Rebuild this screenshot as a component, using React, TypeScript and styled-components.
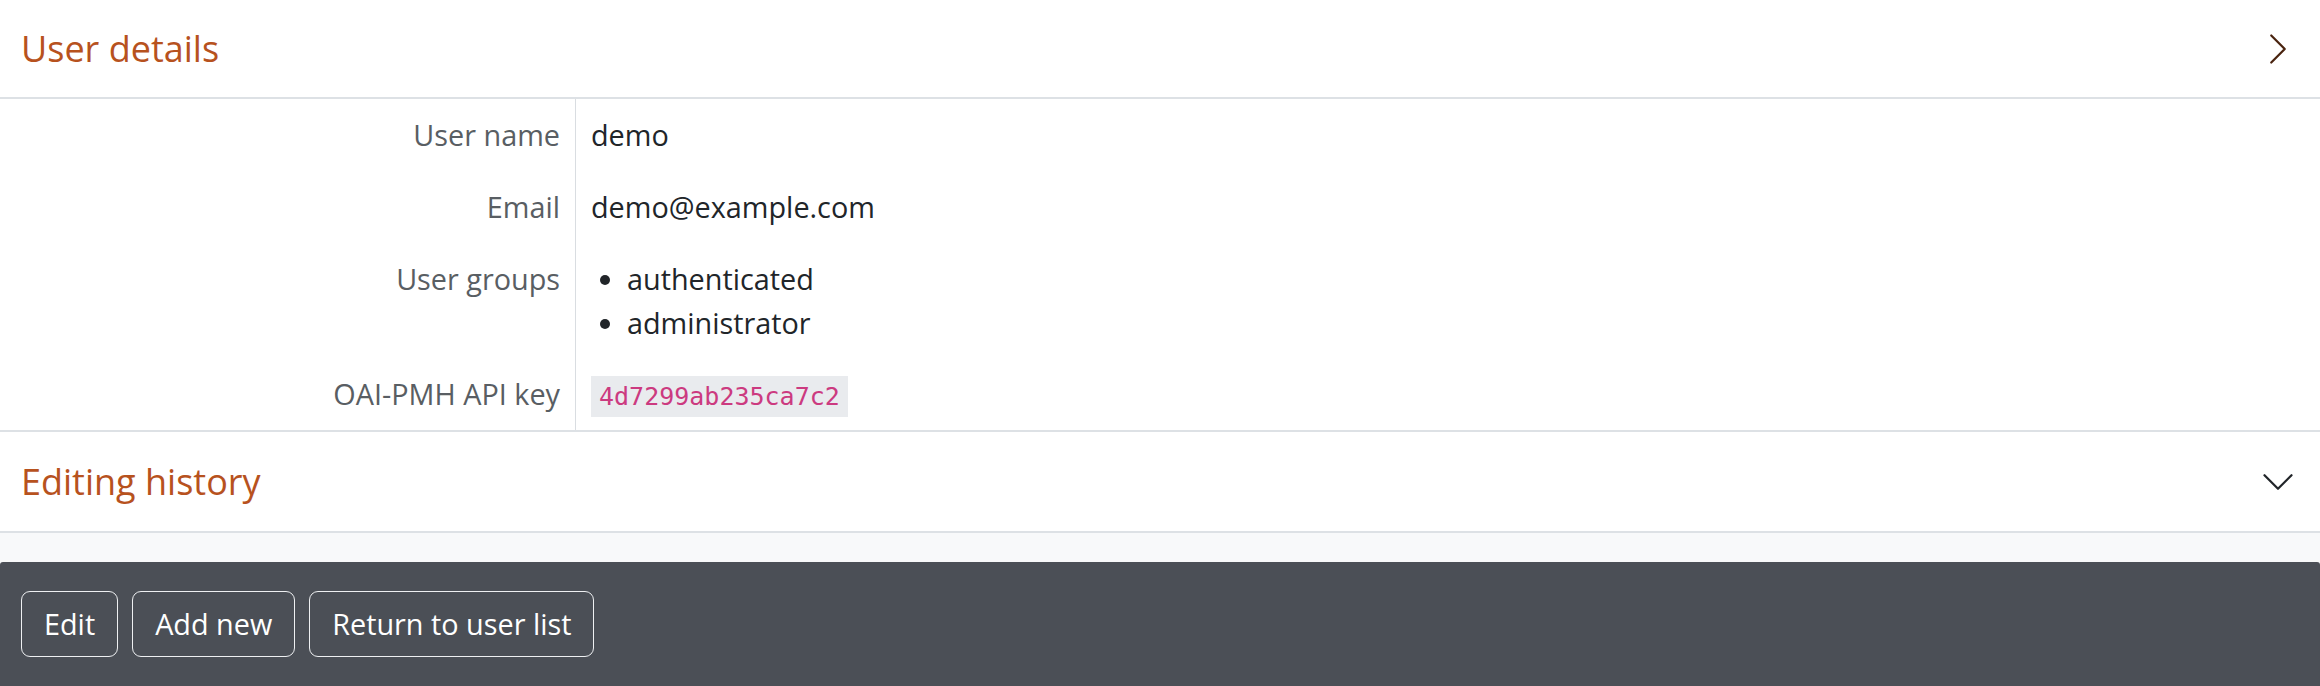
import React from "react";
import styled, { createGlobalStyle } from "styled-components";

const GlobalStyle = createGlobalStyle`
  html, body {
    margin: 0;
    padding: 0;
    background: #f8f9fa;
    font-family: "Open Sans", "Liberation Sans", sans-serif;
    color: #212529;
    overflow: hidden;
  }
  * { box-sizing: border-box; }
`;

const Page = styled.div`
  display: flex;
  flex-direction: column;
  min-height: 686px;
`;

const Accordion = styled.div`
  background: #ffffff;
  margin-bottom: 29px;
`;

const Item = styled.section<{ $first?: boolean }>`
  border-top: ${(p) => (p.$first ? "none" : "2px solid #dde1e5")};
  &:last-child {
    border-bottom: 2px solid #dde1e5;
  }
`;

const Header = styled.div<{ $open?: boolean }>`
  display: flex;
  align-items: center;
  justify-content: space-between;
  height: 99px;
  padding: 0 24px 0 21px;
  border-bottom: ${(p) => (p.$open ? "2px solid #dde1e5" : "none")};
`;

const Title = styled.h2`
  margin: 0;
  font-size: 36px;
  font-weight: 400;
  line-height: 1.5;
  color: #b7521e;
`;

const Chevron = styled.svg<{ $tone: string }>`
  width: 36px;
  height: 36px;
  flex: none;
  stroke: ${(p) => p.$tone};
  fill: none;
`;

const DetailsGrid = styled.dl`
  display: grid;
  grid-template-columns: 576px 1fr;
  margin: 0;
  font-size: 28.8px;
  line-height: 1.5;
`;

const Label = styled.dt`
  margin: 0;
  padding: 14.4px 15px;
  text-align: right;
  color: #595e63;
  border-right: 1px solid #d9dde1;
`;

const Value = styled.dd`
  margin: 0;
  padding: 14.4px 15px;
  color: #212529;
`;

const GroupList = styled.ul`
  margin: 0;
  padding-left: 36px;
  list-style: disc;
`;

const Code = styled.code`
  font-family: "DejaVu Sans Mono", "Liberation Mono", monospace;
  font-size: 25px;
  color: #cc3a80;
  background: #e9ebee;
  padding: 6px 8px;
`;

const Footer = styled.footer`
  display: flex;
  gap: 14px;
  align-items: flex-start;
  background: #4b4f56;
  padding: 29px 21px 26px;
  border-radius: 3px 3px 0 0;
  flex: 1;
`;

const FooterButton = styled.button`
  font-family: "Open Sans", "Liberation Sans", sans-serif;
  font-size: 28.8px;
  line-height: 1.5;
  color: #ffffff;
  background: transparent;
  border: 1px solid #eef0f2;
  border-radius: 9px;
  padding: 10px 22px;
  cursor: pointer;
`;

const ChevronRight = () => (
  <Chevron viewBox="0 0 16 16" $tone="#4a2410" strokeWidth={1} strokeLinecap="round" strokeLinejoin="round">
    <path d="M5 2 L11 8 L5 14" />
  </Chevron>
);

const ChevronDown = () => (
  <Chevron viewBox="0 0 16 16" $tone="#212529" strokeWidth={1} strokeLinecap="round" strokeLinejoin="round">
    <path d="M2 5 L8 11 L14 5" />
  </Chevron>
);

export default function App() {
  return (
    <Page>
      <GlobalStyle />
      <Accordion>
        <Item $first>
          <Header $open>
            <Title>User details</Title>
            <ChevronRight />
          </Header>
          <DetailsGrid>
            <Label>User name</Label>
            <Value>demo</Value>
            <Label>Email</Label>
            <Value>demo@example.com</Value>
            <Label>User groups</Label>
            <Value>
              <GroupList>
                <li>authenticated</li>
                <li>administrator</li>
              </GroupList>
            </Value>
            <Label>OAI-PMH API key</Label>
            <Value>
              <Code>4d7299ab235ca7c2</Code>
            </Value>
          </DetailsGrid>
        </Item>
        <Item>
          <Header>
            <Title>Editing history</Title>
            <ChevronDown />
          </Header>
        </Item>
      </Accordion>
      <Footer>
        <FooterButton>Edit</FooterButton>
        <FooterButton>Add new</FooterButton>
        <FooterButton>Return to user list</FooterButton>
      </Footer>
    </Page>
  );
}
